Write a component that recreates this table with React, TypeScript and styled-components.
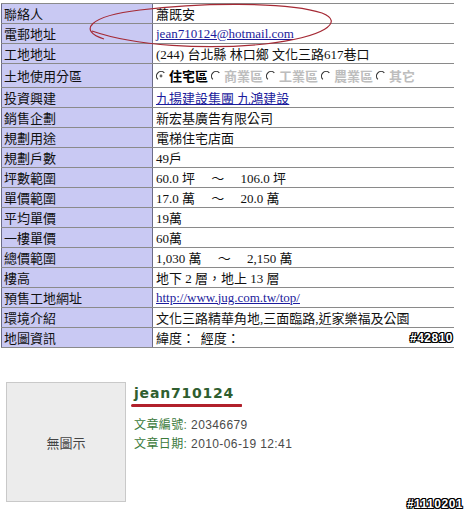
import styled, { createGlobalStyle } from "styled-components";

const GlobalStyle = createGlobalStyle`
  html, body {
    margin: 0;
    padding: 0;
    background: #ffffff;
  }
  body {
    font-family: "Liberation Serif", "Noto Sans CJK TC", serif;
    color: #000;
  }
`;

const Page = styled.div`
  position: relative;
  width: 470px;
  height: 513px;
  padding: 3px 0 0 1px;
  box-sizing: border-box;
  overflow: hidden;
`;

const InfoTable = styled.div`
  width: 453px;
  border-top: 1px solid #8a8a8a;
  font-size: 13px;
`;

const Row = styled.div<{ $tall?: boolean }>`
  display: grid;
  grid-template-columns: 152px 301px;
  height: ${(p) => (p.$tall ? 24 : 20)}px;
  box-sizing: border-box;
  border-bottom: 1px solid #8a8a8a;
`;

const Label = styled.div`
  display: flex;
  align-items: center;
  padding-left: 2px;
  background: #c9c9f3;
  border-left: 1px solid #6c6c88;
  border-right: 1px solid #6c6c88;
  font-family: "Noto Sans CJK TC", sans-serif;
  font-size: 13px;
  color: #111;
`;

const Value = styled.div`
  display: flex;
  align-items: center;
  padding-left: 3px;
  font-family: "Liberation Serif", "Noto Sans CJK TC", serif;
  font-size: 13px;
  white-space: pre;
  color: #111;
`;

const Link = styled.a`
  color: #1c1c9c;
  text-decoration: underline;
`;

const ZoneList = styled.div`
  display: flex;
  align-items: center;
  gap: 3px;
`;

const Zone = styled.span<{ $active?: boolean }>`
  display: inline-flex;
  align-items: center;
  gap: 3px;
  font-family: "Noto Sans CJK TC", sans-serif;
  font-weight: 700;
  font-size: 13px;
  color: ${(p) => (p.$active ? "#000" : "#bdbdbd")};
`;

const MapCell = styled.div`
  display: flex;
  justify-content: space-between;
  align-items: center;
  width: 100%;
  font-family: "Noto Sans CJK TC", sans-serif;
`;

const Stamp = styled.span`
  font-family: "Liberation Sans", sans-serif;
  font-weight: 700;
  font-size: 12px;
  letter-spacing: 0.5px;
  color: #fff;
  text-shadow: 1px 0 0 #000, -1px 0 0 #000, 0 1px 0 #000, 0 -1px 0 #000,
    1px 1px 0 #000, -1px -1px 0 #000, 1px -1px 0 #000, -1px 1px 0 #000;
  margin-right: 1px;
`;

const Circle = styled.svg`
  position: absolute;
  top: 0;
  left: 0;
  pointer-events: none;
`;

const Post = styled.div`
  display: flex;
  align-items: flex-start;
  margin-top: 34px;
  padding: 0 7px 0 5px;
`;

const Thumb = styled.div`
  display: flex;
  align-items: center;
  justify-content: center;
  width: 120px;
  height: 120px;
  margin-bottom: 8px;
  box-sizing: border-box;
  background: #ececec;
  border: 1px solid #c9c9c9;
  font-family: "Noto Sans CJK TC", sans-serif;
  font-size: 13px;
  color: #444;
`;

const PostInfo = styled.div`
  display: flex;
  flex-direction: column;
  margin-left: 8px;
  padding-top: 3px;
`;

const Author = styled.div`
  font-family: "DejaVu Sans", sans-serif;
  font-weight: 700;
  font-size: 14px;
  letter-spacing: 0.8px;
  color: #2f5e2f;
  line-height: 17px;
`;

const Underline = styled.div`
  width: 111px;
  height: 3px;
  margin: 2px 0 9px -3px;
  background: #b1202b;
  border-radius: 2px 1px 1px 2px;
`;

const Meta = styled.div`
  font-family: "Liberation Sans", "Noto Sans CJK TC", sans-serif;
  font-size: 12px;
  line-height: 19px;
  color: #4a4a4a;
  letter-spacing: 0.4px;
`;

const MetaLabel = styled.span`
  color: #3b7a3b;
`;

const FootStamp = styled.div`
  align-self: flex-end;
  margin-left: auto;
  font-family: "Liberation Sans", sans-serif;
  font-weight: 700;
  font-size: 12px;
  letter-spacing: 0.5px;
  line-height: 12px;
  color: #fff;
  text-shadow: 1px 0 0 #000, -1px 0 0 #000, 0 1px 0 #000, 0 -1px 0 #000,
    1px 1px 0 #000, -1px -1px 0 #000, 1px -1px 0 #000, -1px 1px 0 #000;
`;

interface Field {
  label: string;
  value: React.ReactNode;
}

const zones = ["住宅區", "商業區", "工業區", "農業區", "其它"];

function Radio({ checked }: { checked?: boolean }) {
  return (
    <svg width="10" height="10" viewBox="0 0 12 12">
      <path
        d="M10 2.2 A5.2 5.2 0 0 0 2.2 10"
        stroke="#333"
        strokeWidth="1.4"
        fill="none"
      />
      {checked && <circle cx="6" cy="6" r="1.7" fill="#666" />}
    </svg>
  );
}

function getFields(): Field[] {
  return [
    { label: "聯絡人", value: "蕭既安" },
    {
      label: "電郵地址",
      value: <Link href="#">jean710124@hotmail.com</Link>,
    },
    { label: "工地地址", value: "(244) 台北縣 林口鄉 文化三路617巷口" },
    {
      label: "土地使用分區",
      value: (
        <ZoneList>
          {zones.map((z, i) => (
            <Zone key={z} $active={i === 0}>
              <Radio checked={i === 0} />
              {z}
            </Zone>
          ))}
        </ZoneList>
      ),
    },
    { label: "投資興建", value: <Link href="#">九揚建設集團 九鴻建設</Link> },
    { label: "銷售企劃", value: "新宏基廣告有限公司" },
    { label: "規劃用途", value: "電梯住宅店面" },
    { label: "規劃戶數", value: "49戶" },
    { label: "坪數範圍", value: "60.0 坪 　～　 106.0 坪" },
    { label: "單價範圍", value: "17.0 萬 　～　 20.0 萬" },
    { label: "平均單價", value: "19萬" },
    { label: "一樓單價", value: "60萬" },
    { label: "總價範圍", value: "1,030 萬 　～　 2,150 萬" },
    { label: "樓高", value: "地下 2 層，地上 13 層" },
    {
      label: "預售工地網址",
      value: <Link href="#">http://www.jug.com.tw/top/</Link>,
    },
    { label: "環境介紹", value: "文化三路精華角地,三面臨路,近家樂福及公園" },
    {
      label: "地圖資訊",
      value: (
        <MapCell>
          <span>緯度：&nbsp;&nbsp;經度：</span>
          <Stamp>#42810</Stamp>
        </MapCell>
      ),
    },
  ];
}

export default function App() {
  const fields = getFields();
  return (
    <Page>
      <GlobalStyle />
      <InfoTable>
        {fields.map((f, i) => (
          <Row key={f.label} $tall={i === 3}>
            <Label>{f.label}</Label>
            <Value>{f.value}</Value>
          </Row>
        ))}
      </InfoTable>

      <Circle width="470" height="60" viewBox="0 0 470 60">
        <path
          d="M104 39 C78 31, 88 16, 140 10 C195 3, 285 1, 322 13 C345 22, 325 37, 265 44 C205 50, 135 46, 92 31"
          stroke="#a52a35"
          strokeWidth="1.2"
          fill="none"
        />
      </Circle>

      <Post>
        <Thumb>無圖示</Thumb>
        <PostInfo>
          <Author>jean710124</Author>
          <Underline />
          <Meta>
            <MetaLabel>文章編號:</MetaLabel> 20346679
          </Meta>
          <Meta>
            <MetaLabel>文章日期:</MetaLabel> 2010-06-19 12:41
          </Meta>
        </PostInfo>
        <FootStamp>#1110201</FootStamp>
      </Post>
    </Page>
  );
}
